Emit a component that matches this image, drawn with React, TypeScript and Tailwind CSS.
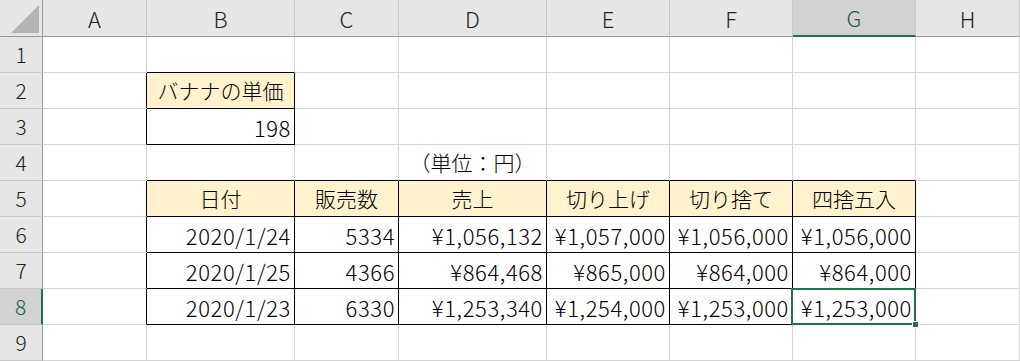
import React from 'react';

type Align = 'left' | 'center' | 'right';

interface CellData {
  text: string;
  align: Align;
  fill?: boolean;
}

const COLS = ['A', 'B', 'C', 'D', 'E', 'F', 'G', 'H'];
const ROWS = [1, 2, 3, 4, 5, 6, 7, 8, 9];

const SELECTED = { col: 'G', row: 8 };

const head = (text: string): CellData => ({ text, align: 'center', fill: true });
const num = (text: string): CellData => ({ text, align: 'right' });

const CELLS: Record<string, CellData> = {
  B2: head('バナナの単価'),
  B3: num('198'),
  D4: { text: '（単位：円）', align: 'center' },
  B5: head('日付'),
  C5: head('販売数'),
  D5: head('売上'),
  E5: head('切り上げ'),
  F5: head('切り捨て'),
  G5: head('四捨五入'),
  B6: num('2020/1/24'),
  C6: num('5334'),
  D6: num('¥1,056,132'),
  E6: num('¥1,057,000'),
  F6: num('¥1,056,000'),
  G6: num('¥1,056,000'),
  B7: num('2020/1/25'),
  C7: num('4366'),
  D7: num('¥864,468'),
  E7: num('¥865,000'),
  F7: num('¥864,000'),
  G7: num('¥864,000'),
  B8: num('2020/1/23'),
  C8: num('6330'),
  D8: num('¥1,253,340'),
  E8: num('¥1,254,000'),
  F8: num('¥1,253,000'),
  G8: num('¥1,253,000'),
};

// cells that carry a thin black outline
const isBoxed = (col: number, row: number) => {
  if (col === 1 && (row === 2 || row === 3)) return true;
  return col >= 1 && col <= 6 && row >= 5 && row <= 8;
};

const alignClass: Record<Align, string> = {
  left: 'justify-start pl-1 text-[21px]',
  center: 'justify-center text-[21px]',
  right: 'justify-end pr-[3px] text-[22px] tracking-[0.6px]',
};

const Corner = () => (
  <div className="relative border-r border-b border-r-[#9b9b9b] border-b-[#9b9b9b] bg-[#e6e6e6]">
    <svg className="absolute left-[11px] top-[5px]" width="29" height="29" viewBox="0 0 29 29">
      <polygon points="28,0 28,28 0,28" fill="#b3b3b3" />
    </svg>
  </div>
);

const ColHeader = ({ label }: { label: string }) => {
  const active = label === SELECTED.col;
  return (
    <div
      className={`flex items-center justify-center border-r border-r-[#c8c8c8] text-[22px] ${
        active
          ? 'border-b-2 border-b-[#217346] bg-[#d2d2d2] text-[#1c5e39]'
          : 'border-b border-b-[#9b9b9b] bg-[#e6e6e6] text-[#222]'
      }`}
    >
      {label}
    </div>
  );
};

const RowHeader = ({ row }: { row: number }) => {
  const active = row === SELECTED.row;
  return (
    <div
      className={`flex items-center justify-center border-b border-b-[#c8c8c8] text-[21px] ${
        active
          ? 'border-r-2 border-r-[#217346] bg-[#d2d2d2] text-[#1c5e39]'
          : 'border-r border-r-[#9b9b9b] bg-[#e6e6e6] text-[#222]'
      }`}
    >
      {row}
    </div>
  );
};

const Cell = ({ col, row }: { col: number; row: number }) => {
  const id = `${COLS[col]}${row}`;
  const data = CELLS[id];
  const rightBlack = isBoxed(col, row) || isBoxed(col + 1, row);
  const bottomBlack = isBoxed(col, row) || isBoxed(col, row + 1);
  const selected = COLS[col] === SELECTED.col && row === SELECTED.row;

  return (
    <div
      className={`relative flex items-center whitespace-nowrap border-r border-b text-black ${
        rightBlack ? 'border-r-black' : 'border-r-[#d4d4d4]'
      } ${bottomBlack ? 'border-b-black' : 'border-b-[#d4d4d4]'} ${
        data?.fill ? 'bg-[#fff2cc]' : 'bg-white'
      } ${data ? alignClass[data.align] : ''} ${selected ? 'z-10' : ''}`}
    >
      {data && <span className="leading-none">{data.text}</span>}
      {selected && (
        <>
          <div className="pointer-events-none absolute -left-[2px] -top-[1px] -right-[1px] -bottom-[1px] border-2 border-[#217346]" />
          <div className="absolute -right-[4px] -bottom-[4px] h-[7px] w-[7px] border border-white bg-[#217346]" />
        </>
      )}
    </div>
  );
};

export default function App() {
  return (
    <div
      className="grid h-[361px] w-[1020px] overflow-hidden bg-white font-light grid-cols-[43px_104px_148px_104px_148px_123px_123px_123px_1fr] grid-rows-[37px_repeat(9,36px)]"
      style={{ fontFamily: '"Noto Sans CJK JP", "Noto Sans", sans-serif' }}
    >
      {/* Column headers */}
      <Corner />
      {COLS.map((c) => (
        <ColHeader key={c} label={c} />
      ))}

      {/* Rows */}
      {ROWS.map((r) => (
        <React.Fragment key={r}>
          <RowHeader row={r} />
          {COLS.map((_, ci) => (
            <Cell key={ci} col={ci} row={r} />
          ))}
        </React.Fragment>
      ))}
    </div>
  );
}
